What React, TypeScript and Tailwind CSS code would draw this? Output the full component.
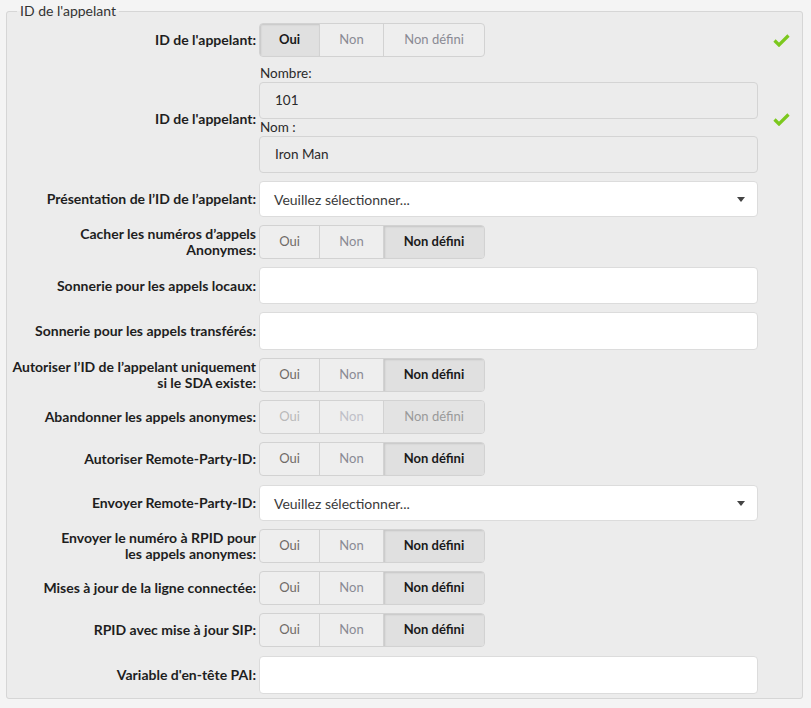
import React from "react";

type Sel = "oui" | "non" | "nd";

function Check() {
  return (
    <svg width="17" height="14" viewBox="0 0 17 14" className="block">
      <path d="M1.5 7.5 L6 12 L15.5 2.5" fill="none" stroke="#7cc81e" strokeWidth="3.2" strokeLinejoin="miter" />
    </svg>
  );
}

function Toggle({ sel, disabled }: { sel: Sel; disabled?: boolean }) {
  const base = "flex items-center justify-center h-full text-[13px]";
  const cls = (k: Sel) => {
    const active = sel === k;
    if (disabled) {
      return active ? "bg-[#e3e3e3] text-[#9a9a9a]" : k === "oui" ? "text-[#b9b9b9]" : "text-[#c0c0c8]";
    }
    if (active) return "bg-[#e0e0e0] text-[#1a1a1a] font-bold shadow-[inset_1px_1px_2px_rgba(0,0,0,0.12)]";
    return k === "oui" ? "text-[#6f6a66]" : "text-[#8a8a94]";
  };
  return (
    <div className="flex h-[34px] w-[226px] border border-[#d2d2d2] rounded-[4px] overflow-hidden bg-[#eeeeee]">
      <div className={`${base} w-[60px] border-r border-[#d2d2d2] ${cls("oui")}`}>Oui</div>
      <div className={`${base} w-[64px] border-r border-[#d2d2d2] ${cls("non")}`}>Non</div>
      <div className={`${base} flex-1 ${cls("nd")}`}>Non défini</div>
    </div>
  );
}

function TextInput() {
  return <div className="h-[38px] w-full bg-white border border-[#dcdcdc] rounded-[4px]" />;
}

function Select() {
  return (
    <div className="h-[36px] w-full bg-white border border-[#dcdcdc] rounded-[4px] flex items-center pl-[14px] pr-[12px] text-[14px] text-[#3a3a3a]">
      <span className="flex-1">Veuillez sélectionner...</span>
      <svg width="8" height="5" viewBox="0 0 8 5">
        <path d="M0 0 L8 0 L4 5 Z" fill="#444" />
      </svg>
    </div>
  );
}

function Row({
  label,
  children,
  check,
}: {
  label: React.ReactNode;
  children: React.ReactNode;
  check?: boolean;
}) {
  return (
    <div className="flex items-center">
      <div className="w-[251px] pr-[3px] text-right font-bold text-[14px] leading-[16px] text-[#1e1e1e]">{label}</div>
      <div className="w-[499px]">{children}</div>
      <div className="flex-1 flex justify-center pl-[2px]">{check ? <Check /> : null}</div>
    </div>
  );
}

export default function App() {
  return (
    <div
      className="min-h-[708px] w-[811px] bg-[#f4f4f4] pt-[1px]"
      style={{ fontFamily: "Lato, 'Open Sans', sans-serif" }}
    >
      <fieldset className="mx-[6px] w-[797px] border border-[#d6d6d6] rounded-[3px] bg-[#ececec] pl-0 pr-0 pt-[2px] pb-[4px]">
        <legend className="ml-[10px] px-[3px] text-[14px] leading-[20px] text-[#333]">ID de l'appelant</legend>
        <div className="flex flex-col gap-[8px] pl-[1px]">
          <Row label="ID de l'appelant:" check>
            <Toggle sel="oui" />
          </Row>
          <Row label="ID de l'appelant:" check>
            <div className="flex flex-col">
              <div className="text-[13.5px] leading-[17px] text-[#2a2a2a] pl-[1px]">Nombre:</div>
              <div className="h-[37px] border border-[#d4d4d4] rounded-[4px] bg-[#ececec] flex items-center pl-[15px] text-[13.5px] text-[#2a2a2a]">
                101
              </div>
              <div className="text-[13.5px] leading-[17px] text-[#2a2a2a] pl-[1px]">Nom :</div>
              <div className="h-[37px] border border-[#d4d4d4] rounded-[4px] bg-[#ececec] flex items-center pl-[15px] text-[13.5px] text-[#2a2a2a]">
                Iron Man
              </div>
            </div>
          </Row>
          <Row label="Présentation de l’ID de l’appelant:">
            <Select />
          </Row>
          <Row
            label={
              <>
                Cacher les numéros d’appels
                <br />
                Anonymes:
              </>
            }
          >
            <Toggle sel="nd" />
          </Row>
          <Row label="Sonnerie pour les appels locaux:">
            <div className="h-[37px] w-full bg-white border border-[#dcdcdc] rounded-[4px]" />
          </Row>
          <Row label="Sonnerie pour les appels transférés:">
            <TextInput />
          </Row>
          <Row
            label={
              <>
                Autoriser l’ID de l’appelant uniquement
                <br />
                si le SDA existe:
              </>
            }
          >
            <Toggle sel="nd" />
          </Row>
          <Row label="Abandonner les appels anonymes:">
            <Toggle sel="nd" disabled />
          </Row>
          <div className="mb-[1px]">
            <Row label="Autoriser Remote-Party-ID:">
              <Toggle sel="nd" />
            </Row>
          </div>
          <Row label="Envoyer Remote-Party-ID:">
            <Select />
          </Row>
          <Row
            label={
              <>
                Envoyer le numéro à RPID pour
                <br />
                les appels anonymes:
              </>
            }
          >
            <Toggle sel="nd" />
          </Row>
          <Row label="Mises à jour de la ligne connectée:">
            <Toggle sel="nd" />
          </Row>
          <Row label="RPID avec mise à jour SIP:">
            <Toggle sel="nd" />
          </Row>
          <div className="mt-[1px]">
            <Row label="Variable d'en-tête PAI:">
              <TextInput />
            </Row>
          </div>
        </div>
      </fieldset>
    </div>
  );
}
